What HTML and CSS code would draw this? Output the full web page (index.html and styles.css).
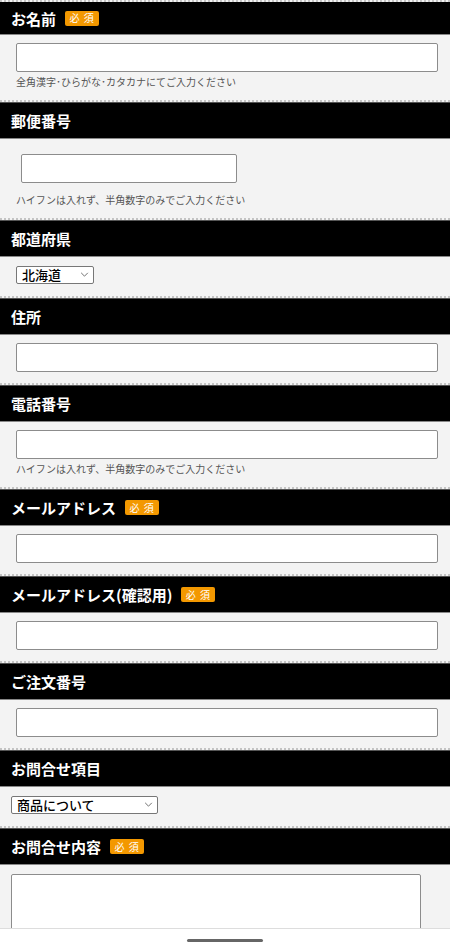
FILE: index.html
```html
<!DOCTYPE html>
<html lang="ja">
<head>
  <meta charset="UTF-8" />
  <meta name="viewport" content="width=device-width, initial-scale=1.0"/>
  <title>お問い合わせフォーム</title>
  <link rel="stylesheet" href="styles.css">
</head>
<body>
  <form class="contact-form">
    <div class="field field-top">
      <div class="field-head field-head-first">お名前<span class="req">必 須</span></div>
      <div class="field-body">
        <input type="text" class="text-input">
        <p class="note">全角漢字･ひらがな･カタカナにてご入力ください</p>
      </div>
    </div>
    <div class="field">
      <div class="field-head">郵便番号</div>
      <div class="field-body body-zip">
        <input type="text" class="text-input zip-input">
        <p class="note note-zip">ハイフンは入れず、半角数字のみでご入力ください</p>
      </div>
    </div>
    <div class="field">
      <div class="field-head">都道府県</div>
      <div class="field-body body-select">
        <span class="select-wrap">
          <select class="select pref-select">
            <option>北海道</option>
            <option>青森県</option>
            <option>岩手県</option>
          </select>
          <svg class="chevron" viewBox="0 0 10 6"><path d="M1 1l4 4 4-4" fill="none" stroke="#555" stroke-width="1"/></svg>
        </span>
      </div>
    </div>
    <div class="field">
      <div class="field-head">住所</div>
      <div class="field-body">
        <input type="text" class="text-input">
      </div>
    </div>
    <div class="field">
      <div class="field-head">電話番号</div>
      <div class="field-body">
        <input type="tel" class="text-input">
        <p class="note">ハイフンは入れず、半角数字のみでご入力ください</p>
      </div>
    </div>
    <div class="field">
      <div class="field-head">メールアドレス<span class="req">必 須</span></div>
      <div class="field-body">
        <input type="email" class="text-input">
      </div>
    </div>
    <div class="field">
      <div class="field-head">メールアドレス(確認用)<span class="req">必 須</span></div>
      <div class="field-body">
        <input type="email" class="text-input">
      </div>
    </div>
    <div class="field">
      <div class="field-head">ご注文番号</div>
      <div class="field-body">
        <input type="text" class="text-input">
      </div>
    </div>
    <div class="field">
      <div class="field-head">お問合せ項目</div>
      <div class="field-body body-select body-narrow">
        <span class="select-wrap">
          <select class="select item-select">
            <option>商品について</option>
            <option>配送について</option>
            <option>その他</option>
          </select>
          <svg class="chevron" viewBox="0 0 10 6"><path d="M1 1l4 4 4-4" fill="none" stroke="#555" stroke-width="1"/></svg>
        </span>
      </div>
    </div>
    <div class="field">
      <div class="field-head">お問合せ内容<span class="req">必 須</span></div>
      <div class="field-body body-narrow body-text">
        <textarea class="textarea"></textarea>
      </div>
    </div>
  </form>
  <div class="nav-bar"><span class="nav-pill"></span></div>
</body>
</html>
```

FILE: styles.css
```css
html, body {
  margin: 0;
  padding: 0;
  height: 100vh;
  overflow: hidden;
  background: #f3f3f3;
  font-family: "Noto Sans CJK JP", "Noto Sans", sans-serif;
}
.contact-form {
  margin: 0;
}
.field {
  background: #f3f3f3;
  border-bottom: 2px dotted #c4c4c4;
}
.field-top {
  border-top: 2px dotted #c4c4c4;
}
.field-head {
  display: flex;
  align-items: center;
  height: 35px;
  padding-left: 11px;
  background: #000;
  border-top: 1px solid #555;
  border-bottom: 1px solid #888;
  color: #fff;
  font-size: 15px;
  font-weight: 700;
  line-height: 1;
}
.field-head-first {
  height: 32px;
  border-top: none;
}
.req {
  display: inline-flex;
  align-items: center;
  justify-content: center;
  width: 34px;
  height: 15px;
  margin-left: 9px;
  background: #f39800;
  border-radius: 2px;
  color: #fff;
  font-size: 10px;
  font-weight: 400;
  letter-spacing: 1px;
}
.field-body {
  padding: 8px 12px 11px 16px;
}
.body-zip {
  padding: 15px 12px 11px 21px;
}
.body-select {
  display: flex;
  align-items: center;
  height: 18px;
  padding: 9px 12px 12px 16px;
}
.body-narrow {
  padding-left: 11px;
}
.body-text {
  padding-top: 9px;
}
.text-input {
  display: block;
  box-sizing: border-box;
  width: 100%;
  height: 29px;
  margin: 0;
  border: 1px solid #8c8c8c;
  border-radius: 2px;
  background: #fff;
  outline: none;
}
.zip-input {
  width: 216px;
}
.note {
  margin: 3px 0 0 0;
  color: #555;
  font-size: 10px;
  line-height: 14px;
}
.note-zip {
  margin: 10px 0 0 -5px;
}
.select-wrap {
  position: relative;
  display: flex;
  align-items: center;
  height: 18px;
}
.select {
  -webkit-appearance: none;
  appearance: none;
  box-sizing: border-box;
  height: 18px;
  margin: 0;
  padding: 0 0 0 5px;
  border: 1px solid #777;
  border-radius: 2px;
  background: #fff;
  color: #000;
  font-family: "Noto Sans CJK JP", sans-serif;
  font-size: 13px;
  font-weight: 500;
  line-height: 16px;
  outline: none;
}
.pref-select {
  width: 78px;
}
.item-select {
  width: 147px;
}
.chevron {
  position: absolute;
  right: 5px;
  top: 6px;
  width: 9px;
  height: 5px;
  pointer-events: none;
}
.textarea {
  display: block;
  box-sizing: border-box;
  width: 410px;
  height: 110px;
  margin: 0;
  border: 1px solid #8c8c8c;
  border-radius: 2px;
  background: #fff;
  resize: none;
  outline: none;
}
/* 端末のナビゲーションバー */
.nav-bar {
  position: fixed;
  left: 0;
  right: 0;
  bottom: 0;
  height: 18px;
  background: #fff;
  border-top: 1px solid #ddd;
  display: flex;
  justify-content: center;
  align-items: center;
}
.nav-pill {
  display: block;
  width: 76px;
  height: 3px;
  margin-top: 4px;
  border-radius: 2px;
  background: #666;
}
```
